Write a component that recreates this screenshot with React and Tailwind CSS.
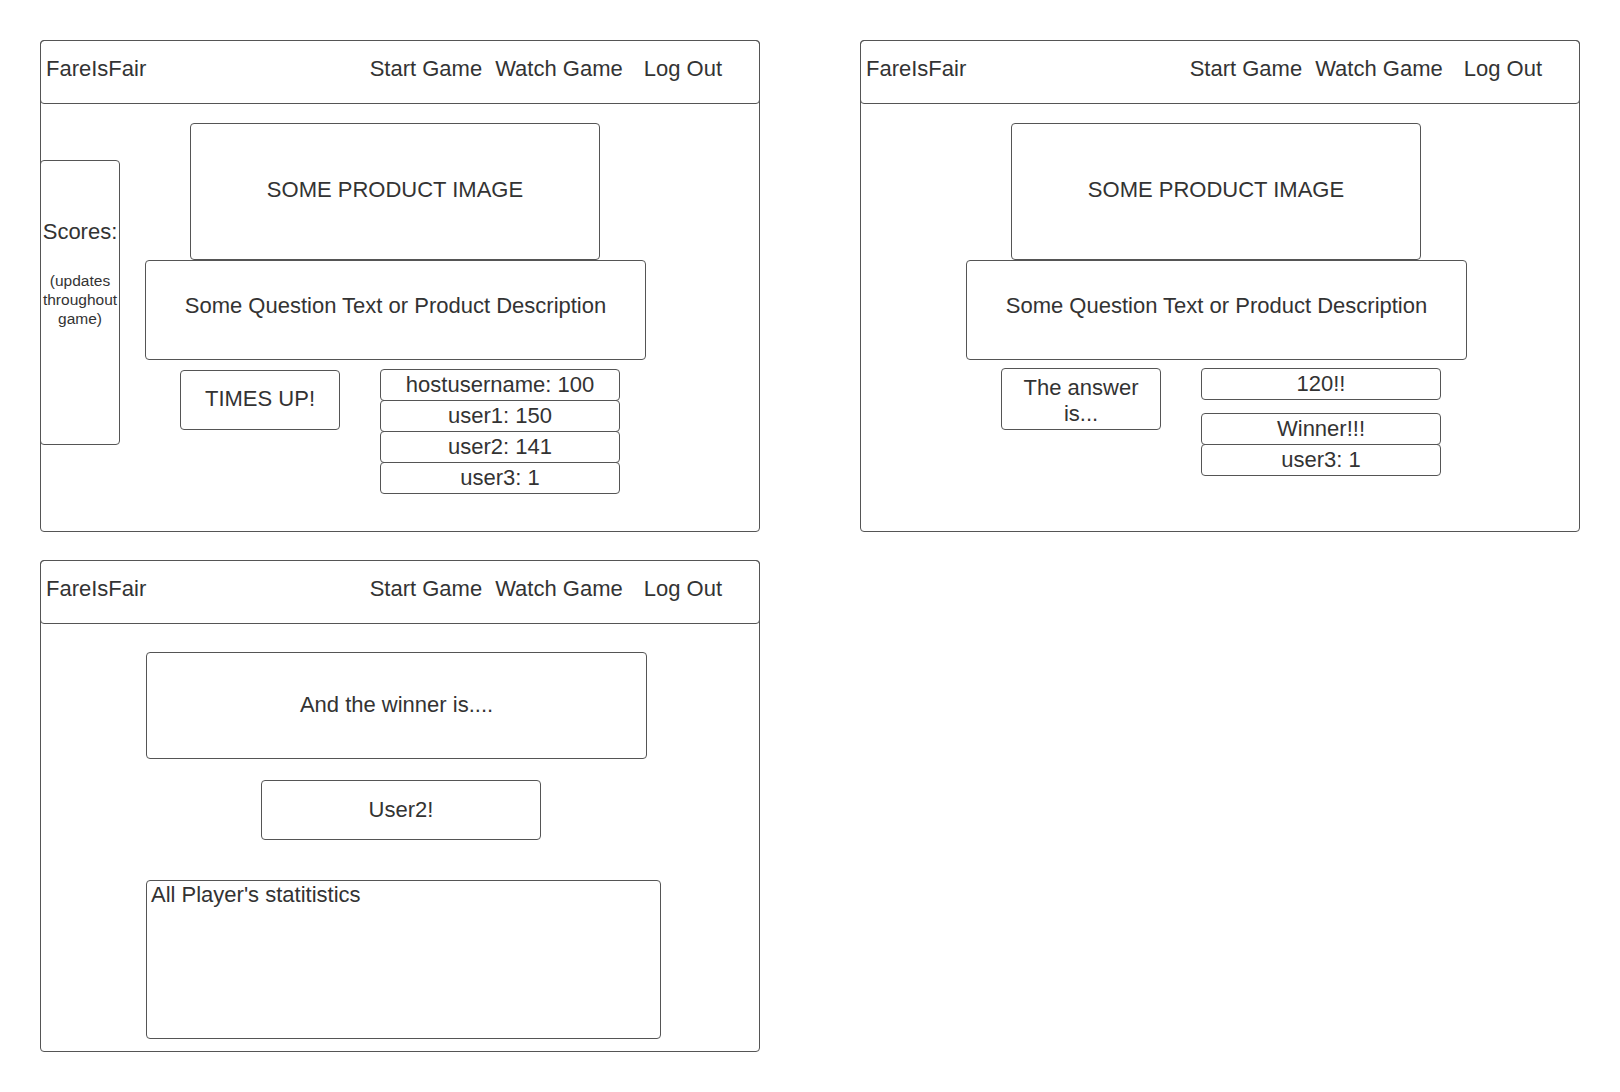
const Box = ({ className = "", children }) => (
  <div
    className={`border border-[#555] rounded-[4px] flex items-center justify-center text-center ${className}`}
  >
    {children}
  </div>
);

const Header = () => (
  <div className="h-[64px] -mx-px -mt-px border border-[#555] rounded-[4px] flex items-start justify-between pt-[15px] pl-[5px] pr-[37px] shrink-0">
    <span>FareIsFair</span>
    <nav className="flex">
      <span>Start Game</span>
      <span className="ml-[13px]">Watch Game</span>
      <span className="ml-[21px]">Log Out</span>
    </nav>
  </div>
);

const Panel = ({ children }) => (
  <div className="w-[720px] h-[492px] border border-[#555] rounded-[4px] flex flex-col">
    <Header />
    {children}
  </div>
);

const ScoreRows = ({ rows }) => (
  <div className="w-[240px] flex flex-col">
    {rows.map((r, i) => (
      <Box key={i} className={`h-[32px] ${i > 0 ? "-mt-px" : ""}`}>
        {r}
      </Box>
    ))}
  </div>
);

export default function App() {
  return (
    <div
      className="min-h-screen bg-white text-[#333] text-[22px] leading-[1.2] pl-[40px] pt-[40px]"
      style={{ fontFamily: '"Liberation Sans", Arial, sans-serif' }}
    >
      <div className="grid grid-cols-[720px_720px] gap-x-[100px] gap-y-[28px]">
        {/* round in progress */}
        <Panel>
          <div className="flex">
            <div className="w-[80px] h-[285px] -ml-px mt-[56px] border border-[#555] rounded-[4px] flex flex-col items-center pt-[58px] shrink-0">
              <span>Scores:</span>
              <span className="text-[15.5px] leading-[18.6px] mt-[27px] text-center">
                (updates
                <br />
                throughout
                <br />
                game)
              </span>
            </div>
            <div className="flex flex-col items-start">
              <Box className="ml-[70px] mt-[19px] w-[410px] h-[137px] pb-[2px]">
                SOME PRODUCT IMAGE
              </Box>
              <Box className="ml-[25px] w-[501px] h-[100px] pb-[7px]">
                Some Question Text or Product Description
              </Box>
              <div className="ml-[60px] mt-[9px] flex items-start">
                <Box className="w-[160px] h-[60px] mt-[1px] pb-[2px]">TIMES UP!</Box>
                <div className="ml-[40px]">
                  <ScoreRows rows={["hostusername: 100", "user1: 150", "user2: 141", "user3: 1"]} />
                </div>
              </div>
            </div>
          </div>
        </Panel>

        {/* answer reveal */}
        <Panel>
          <div className="flex">
            <div className="w-[80px] shrink-0" />
            <div className="flex flex-col items-start">
              <Box className="ml-[70px] mt-[19px] w-[410px] h-[137px] pb-[2px]">
                SOME PRODUCT IMAGE
              </Box>
              <Box className="ml-[25px] w-[501px] h-[100px] pb-[7px]">
                Some Question Text or Product Description
              </Box>
              <div className="ml-[60px] mt-[8px] flex items-start">
                <Box className="w-[160px] h-[62px] leading-[26px] pt-[4px]">
                  The answer
                  <br />
                  is...
                </Box>
                <div className="ml-[40px] flex flex-col">
                  <ScoreRows rows={["120!!"]} />
                  <div className="mt-[13px]">
                    <ScoreRows rows={["Winner!!!", "user3: 1"]} />
                  </div>
                </div>
              </div>
            </div>
          </div>
        </Panel>

        {/* game over */}
        <Panel>
          <div className="flex flex-col items-start">
            <Box className="ml-[105px] mt-[28px] w-[501px] h-[107px]">And the winner is....</Box>
            <Box className="ml-[220px] mt-[21px] w-[280px] h-[60px]">User2!</Box>
            <div className="ml-[105px] mt-[40px] w-[515px] h-[159px] border border-[#555] rounded-[4px] pt-[1px] pl-[4px]">
              All Player's statitistics
            </div>
          </div>
        </Panel>
      </div>
    </div>
  );
}
